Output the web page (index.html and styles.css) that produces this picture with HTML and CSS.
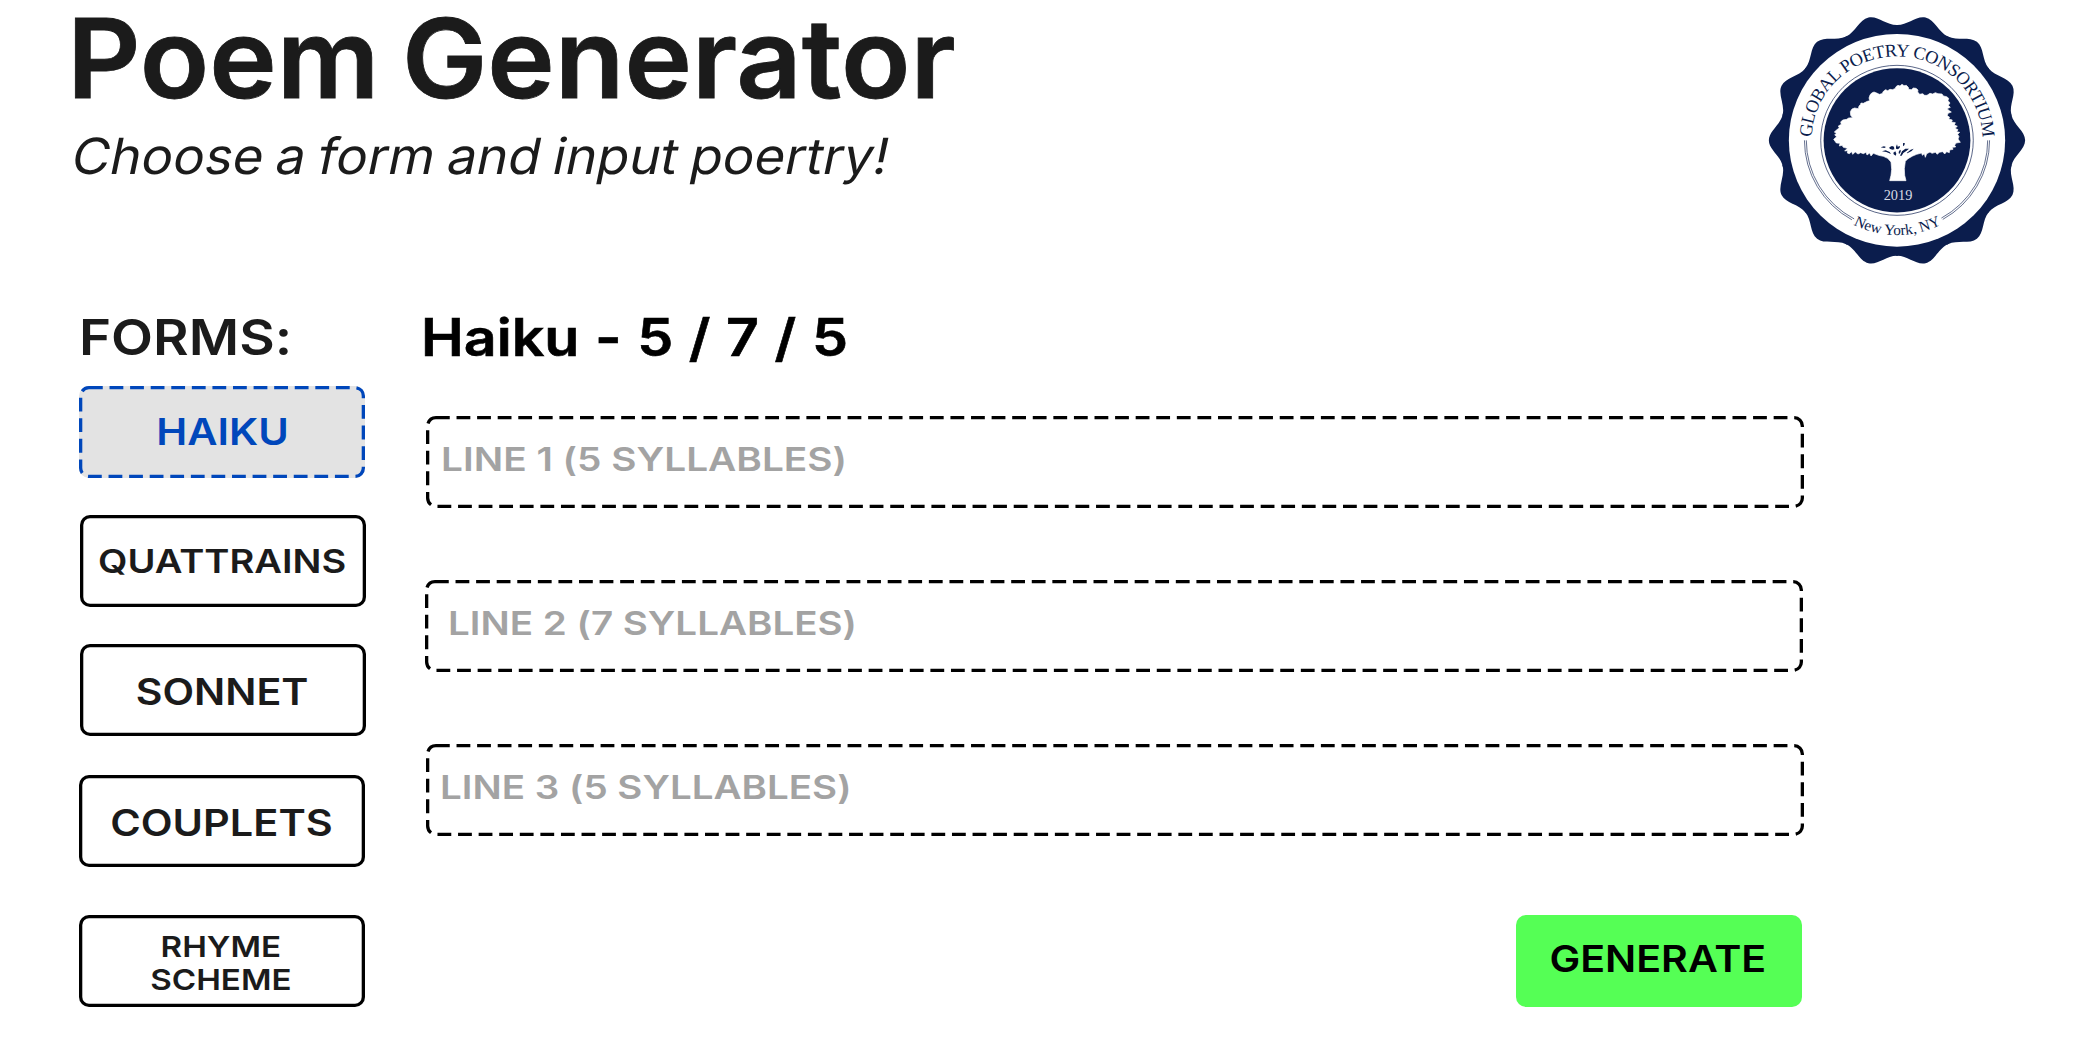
FILE: index.html
```html
<!DOCTYPE html>
<html lang="en">
<head>
<meta charset="utf-8">
<title>Poem Generator</title>
<link rel="stylesheet" href="styles.css">
</head>
<body>
<header class="header">
  <div class="heading">
    <h1 class="title">Poem Generator</h1>
    <p class="subtitle">Choose a form and input poertry!</p>
  </div>
  <svg class="seal" viewBox="0 0 900 840" role="img" aria-label="Global Poetry Consortium seal">
    <defs>
      <path id="lobe" d="M0 0L336.6 -80L337.4 -76.8C344 -46 378 -28 378 0C378 28 344 46 337.4 76.8L336.6 80Z"/>
      <path id="arc-top" d="M-252 0A252 252 0 0 1 252 0"/>
      <path id="arc-bottom" d="M-284 0A284 284 0 0 0 284 0"/>
    </defs>
    <g transform="translate(441 421) scale(1.017 1)">
      <g fill="#0b1d4d">
        <circle r="340"/>
        <use href="#lobe"/>
        <use href="#lobe" transform="rotate(25.714)"/>
        <use href="#lobe" transform="rotate(51.429)"/>
        <use href="#lobe" transform="rotate(77.143)"/>
        <use href="#lobe" transform="rotate(102.857)"/>
        <use href="#lobe" transform="rotate(128.571)"/>
        <use href="#lobe" transform="rotate(154.286)"/>
        <use href="#lobe" transform="rotate(180)"/>
        <use href="#lobe" transform="rotate(205.714)"/>
        <use href="#lobe" transform="rotate(231.429)"/>
        <use href="#lobe" transform="rotate(257.143)"/>
        <use href="#lobe" transform="rotate(282.857)"/>
        <use href="#lobe" transform="rotate(308.571)"/>
        <use href="#lobe" transform="rotate(334.286)"/>
      </g>
      <circle r="319" fill="#fff"/>
      <circle r="225" fill="none" stroke="#0b1d4d" stroke-width="2"/>
      <circle r="216.500" fill="#0b1d4d"/>
      <g fill="none" stroke="#0b1d4d" stroke-width="1.900">
        <path d="M-273 0A273 273 0 0 0 -133 238.400"/>
        <path d="M-267.500 0A267.500 267.500 0 0 0 -126.500 235.700"/>
        <path d="M273 0A273 273 0 0 1 135 237.300"/>
        <path d="M267.500 0A267.500 267.500 0 0 1 131 233.200"/>
      </g>
      <text class="seal-text" font-size="54"><textPath href="#arc-top" startOffset="9" textLength="774">GLOBAL POETRY CONSORTIUM</textPath></text>
      <text class="seal-text" font-size="45"><textPath href="#arc-bottom" startOffset="312">New York, NY</textPath></text>
    </g>
    <text class="seal-year" x="444" y="600" font-size="43" textLength="86">2019</text>
    <g transform="translate(210 210)">
      <path fill="#fff" stroke="#fff" stroke-width="2" stroke-linejoin="round" d="M41 208L50 200L44 195L49 190L43 186L52 178L58 174L55 168L64 163L62 156L68 150L80 148L86 144L98 143L92 136L91 125L96 117L104 114L115 116L117 108L121 104L123 99L130 100L136 97L142 94L149 92L147 84L150 75L155 69L162 66L170 69L178 73L186 71L191 63L197 59L203 62L210 58L217 59L225 56L228 50L234 46L240 48L246 43L252 47L259 46L265 52L266 58L274 59L280 54L288 55L294 60L293 66L299 73L308 71L314 76L321 76L330 70L338 72L346 68L354 71L366 72L370 78L380 80L386 85L384 92L390 99L385 106L391 112L381 116L388 122L394 126L384 130L382 137L389 142L386 147L397 150L394 156L406 158L403 165L412 169L405 175L414 179L410 185L419 187L413 193L417 200L414 207L421 217L408 219L404 226L407 231L397 232L399 238L389 240L388 248L380 245L374 252L368 245L358 247L352 253L346 247L336 250L330 246L320 251L316 262L313 251L307 256L305 249L290 253L278 258L264 266L256 274L253 296L254 316L258 332H209L213 316L215 298L213 276L203 265L190 259L176 256L160 250L153 258L149 249L141 255L138 247L130 251L122 248L114 252L106 246L98 253L95 245L88 251L82 249L83 242L74 243L82 235L70 232L66 226L58 228L60 220L49 219Z"/>
      <path fill="#0b1d4d" d="M208 232L216 228L222 230L223 238L217 239L209 236ZM228 230L231 223L233 230L240 228L239 233L234 238L228 236ZM249 219L255 220L253 226L249 229ZM250 241L256 236L267 236L260 242L250 249L245 257L240 257L246 244ZM239 241L242 239L242 246L237 253L236 246ZM220 248L226 244L229 251L227 257L221 253ZM182 232L192 229L198 231L193 234ZM186 244L197 241L209 246L213 252L199 246ZM272 239L281 236L275 243L262 250L260 249Z"/>
    </g>
  </svg>
</header>
<main class="main">
  <nav class="forms">
    <h2 class="forms-title">FORMS:</h2>
    <button class="form-btn active">
      <svg class="dashes" viewBox="0 0 286 92"><rect x="1.650" y="1.650" width="282.700" height="88.700" rx="8.300"/></svg>
      <span class="label">HAIKU</span>
    </button>
    <button class="form-btn quattrains"><span class="label">QUATTRAINS</span></button>
    <button class="form-btn sonnet"><span class="label">SONNET</span></button>
    <button class="form-btn couplets"><span class="label">COUPLETS</span></button>
    <button class="form-btn rhyme"><span class="label">RHYME<br>SCHEME</span></button>
  </nav>
  <section class="editor">
    <h2 class="editor-title">Haiku - 5 / 7 / 5</h2>
    <div class="line line-1">
      <svg class="dashes" viewBox="0 0 1378 92"><rect x="1.650" y="1.650" width="1374.700" height="88.700" rx="8.300"/></svg>
      <span class="hint">LINE 1 (5 SYLLABLES)</span>
    </div>
    <div class="line line-2">
      <svg class="dashes" viewBox="0 0 1378 92"><rect x="1.650" y="1.650" width="1374.700" height="88.700" rx="8.300"/></svg>
      <span class="hint">LINE 2 (7 SYLLABLES)</span>
    </div>
    <div class="line line-3">
      <svg class="dashes" viewBox="0 0 1378 92"><rect x="1.650" y="1.650" width="1374.700" height="88.700" rx="8.300"/></svg>
      <span class="hint">LINE 3 (5 SYLLABLES)</span>
    </div>
    <button class="generate"><span class="label">GENERATE</span></button>
  </section>
</main>
</body>
</html>
```
FILE: styles.css
```css
* {
  box-sizing: border-box;
}

body {
  margin: 0;
  background: #fff;
  color: #1b1b1b;
  font-family: Inter, "Liberation Sans", sans-serif;
  font-feature-settings: "calt" 0;
}

h1,
h2,
p {
  margin: 0;
  line-height: 1;
  white-space: nowrap;
}

.header {
  display: flex;
  justify-content: space-between;
  height: 312px;
  padding: 0 50px 0 66.5px;
}

.heading {
  padding-top: 4.2px;
}

.title {
  font-size: 109.6px;
  font-weight: 600;
  word-spacing: -6px;
  -webkit-text-stroke: 0.8px currentColor;
  transform: scaleX(1.041);
  transform-origin: 0 0;
}

.subtitle {
  margin: 17px 0 0 2.5px;
  font-size: 50px;
  font-weight: 400;
  word-spacing: -2.2px;
  transform: scaleX(1.056) skewX(-11deg);
  transform-origin: 0 86.4%;
}

.seal {
  width: 300px;
  height: 280px;
}

.seal-text {
  fill: #0b1d4d;
  font-family: "Liberation Serif", serif;
}

.seal-year {
  fill: #d9dbe4;
  font-family: "Liberation Serif", serif;
  text-anchor: middle;
}

.main {
  display: flex;
  gap: 60px;
  padding-left: 79px;
}

.forms {
  display: flex;
  flex-direction: column;
  width: 286px;
}

.forms-title {
  margin: 0.7px 0 24.3px 0;
  font-size: 49px;
  font-weight: 600;
  transform: scaleX(1.115);
  transform-origin: 0 0;
}

.form-btn,
.generate {
  position: relative;
  display: flex;
  flex: none;
  align-items: center;
  justify-content: center;
  width: 286px;
  height: 92px;
  padding: 0;
  border: 0;
  border-radius: 10px;
  background: #fff;
  box-shadow: inset 0 0 0 3.3px #000;
  color: #1b1b1b;
  font: 600 36.7px/1 Inter, "Liberation Sans", sans-serif;
}

.label {
  white-space: nowrap;
  transform: scaleX(1.12);
}

.active {
  background: #e3e3e3;
  box-shadow: none;
  color: #0047bb;
}

.active .label {
  transform: scaleX(1.133);
}

.quattrains {
  margin: 37px 0 0 1px;
  padding-right: 1px;
  font-size: 32.6px;
}

.quattrains .label {
  transform: scaleX(1.169);
}

.sonnet {
  margin: 37px 0 0 1px;
  padding: 4px 1px 0 0;
}

.couplets {
  margin-top: 39px;
  padding: 4px 2px 0 0;
}

.couplets .label {
  transform: scaleX(1.13);
}

.rhyme {
  margin-top: 48px;
  padding: 4px 2px 0 0;
  font-size: 29px;
  line-height: 33px;
}

.rhyme .label {
  transform: scaleX(1.143);
}

.dashes {
  position: absolute;
  inset: 0;
  width: 100%;
  height: 100%;
  fill: none;
  stroke: #000;
  stroke-width: 3.3;
  stroke-dasharray: 13.8 6.78;
}

.active .dashes {
  stroke: #0047bb;
}

.editor {
  display: flex;
  flex-direction: column;
  width: 1379px;
}

.editor-title {
  margin: 0.1px 0 52.3px -4.2px;
  color: #000;
  font-size: 51.6px;
  font-weight: 600;
  word-spacing: 1px;
  -webkit-text-stroke: 0.6px currentColor;
  transform: scaleX(1.111);
  transform-origin: 0 0;
}

.line {
  position: relative;
  display: flex;
  align-items: center;
  width: 1378px;
  height: 92px;
  margin: 0 0 72px 1px;
  padding: 0 0 4px 15px;
}

.line-2 {
  margin-left: 0;
  padding-left: 22.6px;
}

.line-3 {
  margin-bottom: 79px;
  padding-left: 14px;
}

.hint {
  color: #a3a3a3;
  font-size: 33px;
  font-weight: 600;
  line-height: 1;
  white-space: nowrap;
  transform: scaleX(1.168);
  transform-origin: 0 0;
}

.line-1 .hint {
  transform: scaleX(1.176);
}

.generate {
  align-self: flex-end;
  margin-right: 2px;
  padding: 0 2px 4px 0;
  background: #55ff55;
  box-shadow: none;
  color: #000;
}
```
